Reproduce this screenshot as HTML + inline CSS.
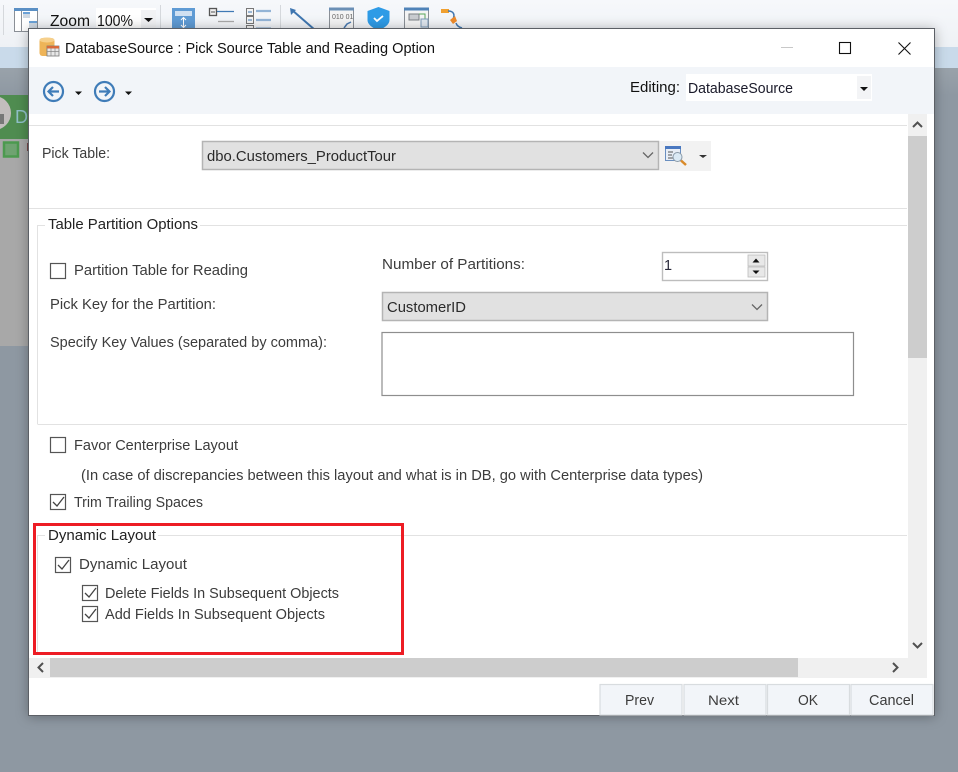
<!DOCTYPE html>
<html><head><meta charset="utf-8"><title>DatabaseSource</title>
<style>
html,body{margin:0;padding:0;background:#8e98a2;width:958px;height:772px;overflow:hidden}
svg{display:block;filter:blur(.3px)}
text{font-family:"Liberation Sans",sans-serif;font-size:14.5px;fill:#3c3c3c}
.d{fill:#111}
</style></head><body>
<svg width="958" height="772" viewBox="0 0 958 772" xmlns="http://www.w3.org/2000/svg">
<defs>
<linearGradient id="tb" x1="0" y1="0" x2="0" y2="1"><stop offset="0" stop-color="#f6f8fb"/><stop offset="1" stop-color="#eef1f5"/></linearGradient>
<linearGradient id="gr" x1="0" y1="0" x2="0" y2="1"><stop offset="0" stop-color="#99a2aa"/><stop offset="1" stop-color="#8e98a2"/></linearGradient>
<filter id="sh" x="-5%" y="-5%" width="110%" height="110%"><feDropShadow dx="0" dy="1" stdDeviation="6" flood-color="#000" flood-opacity=".3"/></filter>
</defs>

<!-- background app -->
<rect width="958" height="47" fill="url(#tb)"/>
<rect y="47" width="958" height="21" fill="#c9daea"/>
<rect y="68" width="958" height="704" fill="#8e98a2"/>
<rect y="68" width="958" height="27" fill="url(#gr)"/>
<rect y="95" width="30" height="44" fill="#4f8c50"/>
<circle cx="-6" cy="113" r="17" fill="#c2bdbd"/>
<rect x="0" y="114" width="4" height="10" fill="#777"/>
<rect y="139" width="30" height="207" fill="#a8a8a8"/>
<rect x="4" y="142.500" width="14" height="14" fill="#6fa371" stroke="#4c9a4f" stroke-width="2.500"/>
<rect x="27" y="143" width="3" height="8" fill="#7a4a4a"/>
<text x="15" y="123" style="fill:#8fc0c8;font-size:18px">Da</text>

<!-- toolbar -->
<rect x="3" y="5" width="1" height="30" fill="#d5d8dc"/>
<rect x="160" y="5" width="1" height="24" fill="#d5d8dc"/>
<rect x="280" y="5" width="1" height="24" fill="#d5d8dc"/>
<rect x="14.500" y="8.500" width="23" height="23" fill="#fff" stroke="#8a8f96"/>
<rect x="14" y="8" width="24" height="3" fill="#5a8fc4"/>
<rect x="21" y="11" width="1" height="20" fill="#8a8f96"/>
<rect x="23" y="12" width="7" height="2" fill="#6ba1d6"/><rect x="23" y="14" width="7" height="4" fill="#cfd8e2"/>
<rect x="29" y="21" width="8" height="2" fill="#6ba1d6"/><rect x="29" y="23" width="8" height="5" fill="#cfd8e2"/>
<rect x="96" y="8" width="60" height="20" fill="#fff"/>
<rect x="141" y="10" width="15" height="18" fill="#f1f2f4"/>
<text x="50" y="26" class="d" textLength="40" lengthAdjust="spacingAndGlyphs" style="font-size:15.500px">Zoom</text>
<text x="97" y="26" class="d" textLength="36" lengthAdjust="spacingAndGlyphs" style="font-size:15.500px">100%</text>
<path d="M144 18h9l-4.500 4z" fill="#111"/>
<rect x="172" y="8" width="23" height="22" fill="#5f9bd4"/>
<rect x="175" y="11" width="17" height="5" fill="#cfe0f2"/>
<path d="M183.500 18v9M181 20l2.500-2.500 2.500 2.500M181 25l2.500 2.500 2.500-2.500" stroke="#fff" fill="none"/>
<rect x="209.500" y="8.500" width="7" height="7" fill="#f0f0f0" stroke="#555" stroke-width="1.300"/><path d="M211 12h4" stroke="#555"/>
<path d="M217 11.500h17" stroke="#3f79b5" stroke-width="1.300"/><path d="M218 21.500h16" stroke="#a8a8a8" stroke-width="1.300"/>
<g fill="#f4f4f4" stroke="#777"><rect x="246.500" y="8.500" width="7" height="7"/><rect x="246.500" y="16.500" width="7" height="7"/><rect x="246.500" y="25.500" width="7" height="6"/></g>
<path d="M248 12h4v0M248 20h4M248 29h4" stroke="#3f79b5"/>
<path d="M256 11h15M256 20h15M256 28.500h15" stroke="#93b4d6" stroke-width="2.200"/>
<path d="M292 10L315 30" stroke="#3f76b0" stroke-width="2"/><path d="M290 8l1 7 5-5z" fill="#3f76b0"/>
<rect x="329.500" y="8.500" width="24" height="22" fill="#f4f4f4" stroke="#8a8f96"/><rect x="329" y="7.500" width="25" height="3" fill="#6a8fb5"/>
<text x="332" y="19" style="font-size:7px;fill:#666">010 01</text>
<path d="M344 28l3 -4 4 -2" stroke="#4a7ab0" stroke-width="1.500" fill="none"/>
<path d="M378.500 7l11 4v9c0 5-6 8-11 11-5-3-11-6-11-11v-9z" fill="#2e9be6"/>
<path d="M374 18l3 3 6-5" stroke="#fff" stroke-width="1.800" fill="none"/>
<rect x="404.500" y="8.500" width="24" height="22" fill="#f4f4f4" stroke="#8a8f96"/><rect x="404" y="7.500" width="25" height="3" fill="#4f83b8"/>
<rect x="409" y="14" width="10" height="6" fill="#c9ccd0" stroke="#7a7f85"/><path d="M419 14h6v5" stroke="#57a65a" fill="none"/><rect x="421" y="19" width="7" height="8" fill="#dfe6ee" stroke="#7a9ab8"/>
<rect x="441" y="9" width="8" height="4" fill="#f0a030"/>
<path d="M448 11c6 0 7 4 5 8" stroke="#3f76b0" stroke-width="1.500" fill="none"/>
<path d="M450 20l5-4 2 5-4 3z" fill="#ee8a2a"/>
<path d="M456 23c1 3 3 4 6 5" stroke="#3f76b0" stroke-width="1.500" fill="none"/>

<!-- dialog -->
<rect x="28.500" y="28.500" width="906" height="687" fill="#fff" stroke="#5c6166" filter="url(#sh)"/>
<rect x="29" y="67" width="905" height="47" fill="#f2f5f9"/>

<!-- title bar -->
<g>
<rect x="39.500" y="38" width="15" height="18" rx="3" fill="#eeb458"/>
<ellipse cx="47" cy="40" rx="7.500" ry="2.500" fill="#f6d08c"/>
<rect x="47" y="46" width="12" height="10" fill="#e8e8e8" stroke="#777" stroke-width=".8"/>
<rect x="47" y="46" width="12" height="2.500" fill="#d96a3a"/>
<path d="M51 48v8M55 48v8M47 51.500h12" stroke="#888" stroke-width=".7"/>
</g>
<text x="65" y="53" class="d" textLength="370" lengthAdjust="spacingAndGlyphs">DatabaseSource : Pick Source Table and Reading Option</text>
<rect x="781" y="47" width="12" height="1" fill="#c8c8c8"/>
<rect x="839.500" y="42.500" width="11" height="11" fill="none" stroke="#111" stroke-width="1.100"/>
<path d="M898.500 42.500l12 12M910.500 42.500l-12 12" stroke="#111" stroke-width="1.100"/>

<!-- nav -->
<g fill="none" stroke="#3f7cb8" stroke-width="2.200">
<circle cx="53.500" cy="91.500" r="9.500"/><path d="M59 91.500h-10M53 87l-4.500 4.500 4.500 4.500"/>
<circle cx="104.500" cy="91.500" r="9.500"/><path d="M99 91.500h10M105 87l4.500 4.500-4.500 4.500"/>
</g>
<path d="M75 91.500h7l-3.500 3.500zM125 91.500h7l-3.500 3.500z" fill="#111"/>
<text x="630" y="92" textLength="50" lengthAdjust="spacingAndGlyphs" class="d">Editing:</text>
<rect x="686" y="74" width="186" height="27" fill="#fff"/>
<rect x="857" y="76" width="14" height="23" fill="#f3f4f6"/>
<text x="688" y="93" textLength="105" lengthAdjust="spacingAndGlyphs" style="fill:#1a1a2a">DatabaseSource</text>
<path d="M860 87h8l-4 4z" fill="#111"/>

<!-- content lines -->
<rect x="29" y="125" width="878" height="1" fill="#e2e2e2"/>
<rect x="29" y="208" width="878" height="1" fill="#e2e2e2"/>
<path d="M37.500 225.500H45M200 225.500H907M37.500 225v199M37.500 424.500H907" stroke="#e2e2e2" fill="none"/>
<path d="M37.500 535.500H45M158 535.500H907M37.500 535V655" stroke="#e2e2e2" fill="none"/>

<!-- pick table -->
<text x="42" y="158" textLength="68" lengthAdjust="spacingAndGlyphs">Pick Table:</text>
<rect x="202.500" y="141.500" width="456" height="28" fill="#e1e1e1" stroke="#b4b4b4" stroke-width="1.500"/>
<text x="207" y="161" textLength="189" lengthAdjust="spacingAndGlyphs" style="fill:#2a2a2a">dbo.Customers_ProductTour</text>
<path d="M643 152.500l5 5 5-5" fill="none" stroke="#666" stroke-width="1.300"/>
<rect x="659.500" y="141" width="51.500" height="30" fill="#f2f2f2"/>
<rect x="665.500" y="146.500" width="15" height="14" fill="#e8eef6" stroke="#6a8fc0"/><rect x="665" y="146" width="16" height="3" fill="#4a78c0"/>
<path d="M668 152h5M668 155h4M668 158h5" stroke="#555"/>
<circle cx="677.500" cy="157" r="4.500" fill="#dbeaf5" stroke="#8a9aa8"/>
<path d="M681 160.500l5 4.500" stroke="#d98a2a" stroke-width="2.500"/>
<path d="M699 155h8l-4 3z" fill="#333"/>

<!-- group 1 -->
<text x="48" y="229" textLength="150" lengthAdjust="spacingAndGlyphs" style="fill:#222">Table Partition Options</text>
<rect x="50.500" y="263.500" width="15" height="15" fill="#fff" stroke="#555" stroke-width="1.200"/>
<text x="74" y="275" textLength="174" lengthAdjust="spacingAndGlyphs">Partition Table for Reading</text>
<text x="382" y="269" textLength="143" lengthAdjust="spacingAndGlyphs">Number of Partitions:</text>
<rect x="662.500" y="252.500" width="105" height="28" fill="#fff" stroke="#bdbdbd" stroke-width="1.400"/>
<text x="664" y="270" style="fill:#2a2a3a">1</text>
<rect x="748" y="255" width="17" height="11" fill="#e8e8e8" stroke="#bbb" stroke-width=".8"/>
<rect x="748" y="267" width="17" height="10" fill="#e8e8e8" stroke="#bbb" stroke-width=".8"/>
<path d="M752.500 262.500h7l-3.500-4zM752.500 270.500h7l-3.500 3.500z" fill="#111"/>
<text x="50" y="309" textLength="166" lengthAdjust="spacingAndGlyphs">Pick Key for the Partition:</text>
<rect x="382.500" y="292.500" width="385" height="28" fill="#e1e1e1" stroke="#b4b4b4" stroke-width="1.500"/>
<text x="387" y="312" textLength="79" lengthAdjust="spacingAndGlyphs" style="fill:#2a2a2a">CustomerID</text>
<path d="M752 304.500l5 5 5-5" fill="none" stroke="#666" stroke-width="1.300"/>
<text x="50" y="347" textLength="277" lengthAdjust="spacingAndGlyphs">Specify Key Values (separated by comma):</text>
<rect x="382" y="332.500" width="471.500" height="63" fill="#fff" stroke="#8e8e8e" stroke-width="1.200"/>

<!-- options -->
<rect x="50.500" y="437.500" width="15" height="15" fill="#fff" stroke="#555" stroke-width="1.200"/>
<text x="74" y="450" textLength="164" lengthAdjust="spacingAndGlyphs">Favor Centerprise Layout</text>
<text x="81" y="480" textLength="622" lengthAdjust="spacingAndGlyphs">(In case of discrepancies between this layout and what is in DB, go with Centerprise data types)</text>
<rect x="50.500" y="494.500" width="15" height="15" fill="#fff" stroke="#555" stroke-width="1.200"/>
<path d="M53 502l4 4 7-9" fill="none" stroke="#444" stroke-width="1.300"/>
<text x="74" y="507" textLength="129" lengthAdjust="spacingAndGlyphs">Trim Trailing Spaces</text>

<!-- dynamic -->
<text x="48" y="540" textLength="108" lengthAdjust="spacingAndGlyphs" style="fill:#222">Dynamic Layout</text>
<rect x="55.500" y="557.500" width="15" height="15" fill="#fff" stroke="#555" stroke-width="1.200"/>
<path d="M58 565l4 4 7-9" fill="none" stroke="#444" stroke-width="1.300"/>
<text x="79" y="569" textLength="108" lengthAdjust="spacingAndGlyphs">Dynamic Layout</text>
<rect x="82.500" y="585.500" width="15" height="15" fill="#fff" stroke="#555" stroke-width="1.200"/>
<path d="M85 593l4 4 7-9" fill="none" stroke="#444" stroke-width="1.300"/>
<text x="105" y="598" textLength="234" lengthAdjust="spacingAndGlyphs">Delete Fields In Subsequent Objects</text>
<rect x="82.500" y="606.500" width="15" height="15" fill="#fff" stroke="#555" stroke-width="1.200"/>
<path d="M85 614l4 4 7-9" fill="none" stroke="#444" stroke-width="1.300"/>
<text x="105" y="619" textLength="220" lengthAdjust="spacingAndGlyphs">Add Fields In Subsequent Objects</text>
<rect x="34.500" y="524.500" width="368" height="129" fill="none" stroke="#ed1c24" stroke-width="3"/>

<!-- scrollbars -->
<rect x="908" y="114" width="19" height="564" fill="#f0f0f0"/>
<rect x="908" y="136" width="19" height="222" fill="#cdcdcd"/>
<path d="M913 127l4.500-4.500 4.500 4.500M913 643l4.500 4.500 4.500-4.500" fill="none" stroke="#505050" stroke-width="2"/>
<rect x="29" y="658" width="898" height="20" fill="#f0f0f0"/>
<rect x="50" y="658" width="748" height="19" fill="#cdcdcd"/>
<path d="M43 663l-4.500 4.500 4.500 4.500M893 663l4.500 4.500-4.500 4.500" fill="none" stroke="#505050" stroke-width="2"/>

<!-- buttons -->
<g fill="#f2f5f9" stroke="#d8dcdf" stroke-width="1.200">
<rect x="600" y="684.500" width="82" height="30.500"/>
<rect x="684" y="684.500" width="82" height="30.500"/>
<rect x="767.500" y="684.500" width="82" height="30.500"/>
<rect x="851" y="684.500" width="82" height="30.500"/>
</g>
<text x="625" y="705" textLength="29" lengthAdjust="spacingAndGlyphs">Prev</text>
<text x="708" y="705" textLength="31" lengthAdjust="spacingAndGlyphs" style="font-size:14px">Next</text>
<text x="798" y="705" textLength="20" lengthAdjust="spacingAndGlyphs">OK</text>
<text x="869" y="705" textLength="45" lengthAdjust="spacingAndGlyphs">Cancel</text>
</svg>
</body></html>
